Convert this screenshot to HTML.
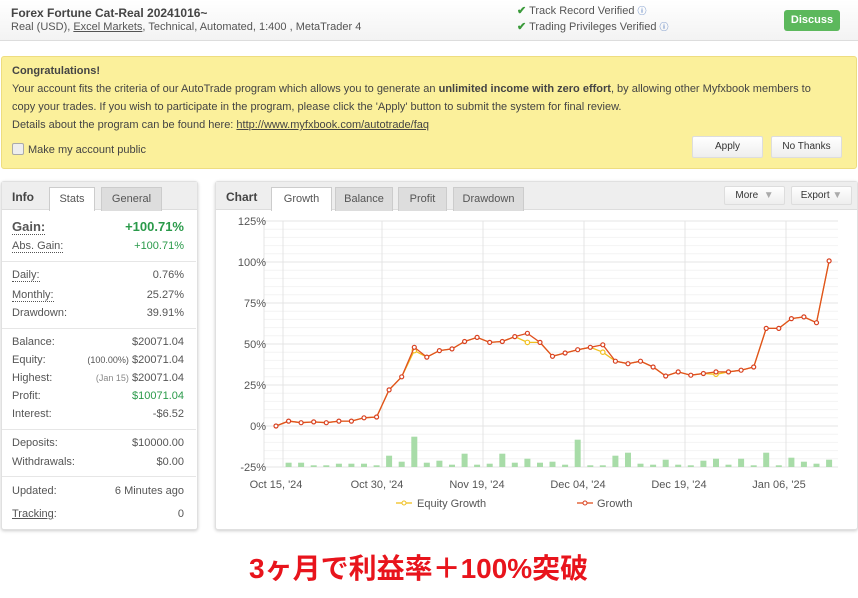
<!DOCTYPE html>
<html><head><meta charset="utf-8"><style>
*{box-sizing:border-box;margin:0;padding:0}
body{width:858px;height:598px;background:#fff;font-family:"Liberation Sans",Tahoma,sans-serif;font-size:11px;color:#444;position:relative;overflow:hidden}
.abs{position:absolute}
.hdr{left:0;top:0;width:858px;height:41px;background:linear-gradient(#fff,#f3f3f3);border-bottom:1px solid #ddd}
.yel{left:1px;top:56px;width:856px;height:113px;background:#fbf09b;border:1px solid #eedd80;border-radius:3px}
.yel p{position:absolute;left:10px;font-size:11px;color:#444}
.btn{position:absolute;background:linear-gradient(#fff,#eee);border:1px solid #ddd;border-radius:2px;font-size:10px;text-align:center;line-height:20px;color:#333}
.panel{background:#fff;border:1px solid #e0e0e0;box-shadow:0 1px 3px #ccc;border-radius:3px}
.row{position:absolute;left:12px;width:172px;font-size:11px;color:#555}
.row span{position:absolute;right:0}
.sep{position:absolute;left:2px;width:194px;border-top:1px solid #e6e6e6}
.tab{position:absolute;top:187px;height:24px;background:#ddd;border:1px solid #ccc;border-bottom:none;font-size:11px;text-align:center;line-height:22px;color:#555}
.dot{border-bottom:1px dotted #555}
</style></head><body>
<div class="abs hdr"></div>
<div class="abs" style="left:11px;top:6px;font-size:12px;font-weight:bold;color:#444">Forex Fortune Cat-Real 20241016~</div>
<div class="abs" style="left:11px;top:21px;font-size:11px;color:#555">Real (USD), <u>Excel Markets</u>, Technical, Automated, 1:400 , MetaTrader 4</div>
<div class="abs" style="left:517px;top:4px;font-size:11px;color:#555"><span style="color:#3a9a3a;font-weight:bold">✔</span> Track Record Verified <span style="color:#3060b0;font-size:9px">ⓘ</span></div>
<div class="abs" style="left:517px;top:20px;font-size:11px;color:#555"><span style="color:#3a9a3a;font-weight:bold">✔</span> Trading Privileges Verified <span style="color:#3060b0;font-size:9px">ⓘ</span></div>
<div class="abs" style="left:784px;top:10px;width:56px;height:21px;background:#5cb85c;border-radius:3px;color:#fff;font-weight:bold;font-size:11px;text-align:center;line-height:21px">Discuss</div>

<div class="abs yel">
<p style="top:8px;font-weight:bold">Congratulations!</p>
<p style="top:26px">Your account fits the criteria of our AutoTrade program which allows you to generate an <b>unlimited income with zero effort</b>, by allowing other Myfxbook members to</p>
<p style="top:44px">copy your trades. If you wish to participate in the program, please click the 'Apply' button to submit the system for final review.</p>
<p style="top:62px">Details about the program can be found here: <u>http://www.myfxbook.com/autotrade/faq</u></p>
<p style="top:86px"><span style="display:inline-block;width:12px;height:12px;border:1px solid #aaa;border-radius:2px;background:#eee;vertical-align:-2px;margin-right:4px"></span>Make my account public</p>
<div class="btn" style="left:690px;top:79px;width:71px;height:22px">Apply</div>
<div class="btn" style="left:769px;top:79px;width:71px;height:22px">No Thanks</div>
</div>

<div class="abs panel" style="left:1px;top:181px;width:197px;height:349px"></div>
<div class="abs" style="left:2px;top:182px;width:195px;height:28px;background:#eee;border-bottom:1px solid #ddd"></div>
<div class="abs" style="left:12px;top:190px;font-weight:bold;font-size:12px;color:#444">Info</div>
<div class="tab" style="left:49px;width:46px;background:#fff">Stats</div>
<div class="tab" style="left:101px;width:61px">General</div>
<div class="row" style="top:219px;font-size:13px;font-weight:bold;color:#555"><b class="dot">Gain:</b><span style="color:#2a9a4a">+100.71%</span></div>
<div class="row" style="top:240px"><i class="dot" style="font-style:normal">Abs. Gain:</i><span style="color:#2a9a4a">+100.71%</span></div>
<div class="sep" style="top:261px"></div>
<div class="row" style="top:269px"><i class="dot" style="font-style:normal">Daily:</i><span>0.76%</span></div>
<div class="row" style="top:289px"><i class="dot" style="font-style:normal">Monthly:</i><span>25.27%</span></div>
<div class="row" style="top:307px">Drawdown:<span>39.91%</span></div>
<div class="sep" style="top:328px"></div>
<div class="row" style="top:336px">Balance:<span>$20071.04</span></div>
<div class="row" style="top:354px">Equity:<span><small style="font-size:9px">(100.00%)</small> $20071.04</span></div>
<div class="row" style="top:372px">Highest:<span><small style="font-size:9px;color:#888">(Jan 15)</small> $20071.04</span></div>
<div class="row" style="top:390px">Profit:<span style="color:#2a9a4a">$10071.04</span></div>
<div class="row" style="top:408px">Interest:<span>-$6.52</span></div>
<div class="sep" style="top:429px"></div>
<div class="row" style="top:437px">Deposits:<span>$10000.00</span></div>
<div class="row" style="top:456px">Withdrawals:<span>$0.00</span></div>
<div class="sep" style="top:476px"></div>
<div class="row" style="top:485px">Updated:<span>6 Minutes ago</span></div>
<div class="row" style="top:508px"><u>Tracking</u>:<span>0</span></div>

<div class="abs panel" style="left:215px;top:181px;width:643px;height:349px"></div>
<div class="abs" style="left:216px;top:182px;width:641px;height:28px;background:#eee;border-bottom:1px solid #ddd"></div>
<div class="abs" style="left:226px;top:190px;font-weight:bold;font-size:12px;color:#444">Chart</div>
<div class="tab" style="left:271px;width:61px;background:#fff">Growth</div>
<div class="tab" style="left:335px;width:58px">Balance</div>
<div class="tab" style="left:398px;width:49px">Profit</div>
<div class="tab" style="left:453px;width:71px">Drawdown</div>
<div class="btn" style="left:724px;top:186px;width:61px;height:19px;line-height:17px">More &nbsp;<span style="color:#aaa">▼</span></div>
<div class="btn" style="left:791px;top:186px;width:61px;height:19px;line-height:17px">Export <span style="color:#aaa">▼</span></div>

<svg class="abs" style="left:0;top:0" width="858" height="598" font-family="Liberation Sans,sans-serif" font-size="11" fill="#555">
<g stroke="#f4f4f4"><path d="M264 229.2H838M264 237.4H838M264 245.6H838M264 253.8H838M264 270.2H838M264 278.4H838M264 286.6H838M264 294.8H838M264 311.2H838M264 319.4H838M264 327.6H838M264 335.8H838M264 352.2H838M264 360.4H838M264 368.6H838M264 376.8H838M264 393.2H838M264 401.4H838M264 409.6H838M264 417.8H838M264 434.2H838M264 442.4H838M264 450.6H838M264 458.8H838"/></g>
<g stroke="#e4e4e4"><path d="M264 221H838M264 262H838M264 303H838M264 344H838M264 385H838M264 426H838M264 467H838M283 221V467M382 221V467M483 221V467M584 221V467M685 221V467M786 221V467M264 221V467"/></g>
<g text-anchor="end"><text x="266" y="225">125%</text><text x="266" y="266">100%</text><text x="266" y="307">75%</text><text x="266" y="348">50%</text><text x="266" y="389">25%</text><text x="266" y="430">0%</text><text x="266" y="471">-25%</text></g>
<g text-anchor="middle"><text x="276" y="488">Oct 15, '24</text><text x="377" y="488">Oct 30, '24</text><text x="477" y="488">Nov 19, '24</text><text x="578" y="488">Dec 04, '24</text><text x="679" y="488">Dec 19, '24</text><text x="779" y="488">Jan 06, '25</text></g>
<g fill="#a8dca8">
<rect x="285.6" y="462.7" width="6" height="4.3"/><rect x="298.1" y="462.7" width="6" height="4.3"/><rect x="310.7" y="465.3" width="6" height="1.7"/><rect x="323.3" y="465.3" width="6" height="1.7"/><rect x="335.9" y="463.7" width="6" height="3.3"/><rect x="348.4" y="463.7" width="6" height="3.3"/><rect x="361" y="463.7" width="6" height="3.3"/><rect x="373.6" y="465.3" width="6" height="1.7"/><rect x="386.1" y="455.7" width="6" height="11.3"/><rect x="398.7" y="461.7" width="6" height="5.3"/><rect x="411.3" y="436.7" width="6" height="30.3"/><rect x="423.8" y="462.7" width="6" height="4.3"/><rect x="436.4" y="460.7" width="6" height="6.3"/><rect x="449" y="464.7" width="6" height="2.3"/><rect x="461.6" y="453.7" width="6" height="13.3"/><rect x="474.1" y="464.7" width="6" height="2.3"/><rect x="486.7" y="463.7" width="6" height="3.3"/><rect x="499.3" y="453.7" width="6" height="13.3"/><rect x="511.8" y="462.7" width="6" height="4.3"/><rect x="524.4" y="458.7" width="6" height="8.3"/><rect x="537" y="462.7" width="6" height="4.3"/><rect x="549.5" y="461.7" width="6" height="5.3"/><rect x="562.1" y="464.7" width="6" height="2.3"/><rect x="574.7" y="439.7" width="6" height="27.3"/><rect x="587.3" y="465.3" width="6" height="1.7"/><rect x="599.8" y="465.3" width="6" height="1.7"/><rect x="612.4" y="455.7" width="6" height="11.3"/><rect x="625" y="452.7" width="6" height="14.3"/><rect x="637.5" y="463.7" width="6" height="3.3"/><rect x="650.1" y="464.7" width="6" height="2.3"/><rect x="662.7" y="459.7" width="6" height="7.3"/><rect x="675.2" y="464.7" width="6" height="2.3"/><rect x="687.8" y="465.3" width="6" height="1.7"/><rect x="700.4" y="460.7" width="6" height="6.3"/><rect x="713" y="458.7" width="6" height="8.3"/><rect x="725.5" y="464.7" width="6" height="2.3"/><rect x="738.1" y="458.7" width="6" height="8.3"/><rect x="750.7" y="465.3" width="6" height="1.7"/><rect x="763.2" y="452.7" width="6" height="14.3"/><rect x="775.8" y="465.3" width="6" height="1.7"/><rect x="788.4" y="457.7" width="6" height="9.3"/><rect x="800.9" y="461.7" width="6" height="5.3"/><rect x="813.5" y="463.7" width="6" height="3.3"/><rect x="826.1" y="459.7" width="6" height="7.3"/>
</g>
<polyline fill="none" stroke="#f0c020" stroke-width="1.3" points="276,426 288.6,421.1 301.1,422.7 313.7,421.9 326.3,422.7 338.9,421.1 351.4,421.1 364,417.8 376.6,417 389.1,389.9 401.7,376.8 414.3,350.6 426.8,357.1 439.4,350.6 452,348.9 464.6,341.5 477.1,337.4 489.7,342.4 502.3,341.5 514.8,336.6 527.4,342.4 540,342.4 552.5,356.3 565.1,353 577.7,349.7 590.3,347.3 602.8,352.2 615.4,361.2 628,363.7 640.5,361.2 653.1,367 665.7,376 678.2,371.9 690.8,375.2 703.4,373.5 716,374.3 728.5,371.9 741.1,370.2 753.7,367 766.2,328.4 778.8,328.4 791.4,318.6 803.9,316.9 816.5,322.7 829.1,260.9"/>
<g fill="#fff" stroke="#f0c020" stroke-width="1.2"><circle cx="414.3" cy="350.6" r="2.2"/><circle cx="527.4" cy="342.4" r="2.2"/><circle cx="602.8" cy="352.2" r="2.2"/><circle cx="716" cy="374.3" r="2.2"/></g>
<polyline fill="none" stroke="#e05020" stroke-width="1.3" points="276,426 288.6,421.1 301.1,422.7 313.7,421.9 326.3,422.7 338.9,421.1 351.4,421.1 364,417.8 376.6,417 389.1,389.9 401.7,376.8 414.3,347.3 426.8,357.1 439.4,350.6 452,348.9 464.6,341.5 477.1,337.4 489.7,342.4 502.3,341.5 514.8,336.6 527.4,333.3 540,342.4 552.5,356.3 565.1,353 577.7,349.7 590.3,347.3 602.8,344.8 615.4,361.2 628,363.7 640.5,361.2 653.1,367 665.7,376 678.2,371.9 690.8,375.2 703.4,373.5 716,371.9 728.5,371.9 741.1,370.2 753.7,367 766.2,328.4 778.8,328.4 791.4,318.6 803.9,316.9 816.5,322.7 829.1,260.9"/>
<g fill="#fff" stroke="#d84020" stroke-width="1.2">
<circle cx="276" cy="426" r="2"/><circle cx="288.6" cy="421.1" r="2"/><circle cx="301.1" cy="422.7" r="2"/><circle cx="313.7" cy="421.9" r="2"/><circle cx="326.3" cy="422.7" r="2"/><circle cx="338.9" cy="421.1" r="2"/><circle cx="351.4" cy="421.1" r="2"/><circle cx="364" cy="417.8" r="2"/><circle cx="376.6" cy="417" r="2"/><circle cx="389.1" cy="389.9" r="2"/><circle cx="401.7" cy="376.8" r="2"/><circle cx="414.3" cy="347.3" r="2"/><circle cx="426.8" cy="357.1" r="2"/><circle cx="439.4" cy="350.6" r="2"/><circle cx="452" cy="348.9" r="2"/><circle cx="464.6" cy="341.5" r="2"/><circle cx="477.1" cy="337.4" r="2"/><circle cx="489.7" cy="342.4" r="2"/><circle cx="502.3" cy="341.5" r="2"/><circle cx="514.8" cy="336.6" r="2"/><circle cx="527.4" cy="333.3" r="2"/><circle cx="540" cy="342.4" r="2"/><circle cx="552.5" cy="356.3" r="2"/><circle cx="565.1" cy="353" r="2"/><circle cx="577.7" cy="349.7" r="2"/><circle cx="590.3" cy="347.3" r="2"/><circle cx="602.8" cy="344.8" r="2"/><circle cx="615.4" cy="361.2" r="2"/><circle cx="628" cy="363.7" r="2"/><circle cx="640.5" cy="361.2" r="2"/><circle cx="653.1" cy="367" r="2"/><circle cx="665.7" cy="376" r="2"/><circle cx="678.2" cy="371.9" r="2"/><circle cx="690.8" cy="375.2" r="2"/><circle cx="703.4" cy="373.5" r="2"/><circle cx="716" cy="371.9" r="2"/><circle cx="728.5" cy="371.9" r="2"/><circle cx="741.1" cy="370.2" r="2"/><circle cx="753.7" cy="367" r="2"/><circle cx="766.2" cy="328.4" r="2"/><circle cx="778.8" cy="328.4" r="2"/><circle cx="791.4" cy="318.6" r="2"/><circle cx="803.9" cy="316.9" r="2"/><circle cx="816.5" cy="322.7" r="2"/><circle cx="829.1" cy="260.9" r="2"/>
</g>
<path d="M396 503H412" stroke="#f0c020" stroke-width="1.3"/><circle cx="404" cy="503" r="2" fill="#fff" stroke="#f0c020"/>
<text x="417" y="507">Equity Growth</text>
<path d="M577 503H593" stroke="#e05020" stroke-width="1.3"/><circle cx="585" cy="503" r="2" fill="#fff" stroke="#d84020"/>
<text x="597" y="507">Growth</text>
</svg>

<div class="abs" style="left:249px;top:547px;font-size:28px;font-weight:bold;color:#e8141c;font-family:'Liberation Sans','Noto Sans CJK JP',sans-serif;white-space:nowrap">3ヶ月で利益率＋100%突破</div>
</body></html>
